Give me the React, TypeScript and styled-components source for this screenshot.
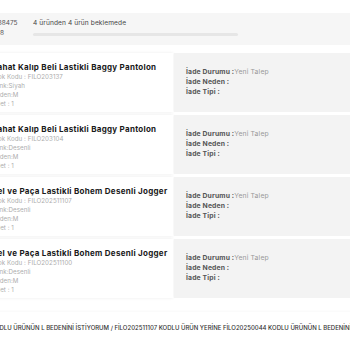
import React from 'react';
import styled, { createGlobalStyle } from 'styled-components';

const GlobalStyle = createGlobalStyle`
  html, body {
    margin: 0;
    padding: 0;
    background: #ffffff;
    overflow: hidden;
    font-family: "Inter", "Open Sans", sans-serif;
  }
`;

interface IReturnItem {
  title: string;
  code: string;
  color: string;
  size: string;
  qty: number;
}

const items: IReturnItem[] = [
  { title: 'Rahat Kalıp Beli Lastikli Baggy Pantolon', code: 'FILO203137', color: 'Siyah', size: 'M', qty: 1 },
  { title: 'Rahat Kalıp Beli Lastikli Baggy Pantolon', code: 'FILO203104', color: 'Desenli', size: 'M', qty: 1 },
  { title: 'Bel ve Paça Lastikli Bohem Desenli Jogger', code: 'FILO202511107', color: 'Desenli', size: 'M', qty: 1 },
  { title: 'Bel ve Paça Lastikli Bohem Desenli Jogger', code: 'FILO202511100', color: 'Desenli', size: 'M', qty: 1 },
];

const Page = styled.div`
  margin-left: -8px;
  width: 420px;
  padding-top: 13px;
`;

const Header = styled.div`
  height: 32px;
  background-color: #f6f6f6;
  display: flex;
  align-items: flex-start;
  padding-top: 5px;
  box-sizing: border-box;
`;

const OrderNo = styled.div`
  width: 26px;
  flex-shrink: 0;
  display: flex;
  flex-direction: column;
  align-items: flex-start;
  font-size: 6.5px;
  line-height: 10px;
  color: #555;
  white-space: nowrap;
`;

const OrderLine = styled.span<{ $shift: number }>`
  margin-left: ${({ $shift }) => $shift}px;
`;

const Progress = styled.div`
  margin-left: 15px;
  width: 205px;
  display: flex;
  flex-direction: column;
`;

const ProgressLabel = styled.div`
  font-size: 6.6px;
  line-height: 10px;
  color: #444;
  letter-spacing: 0.1px;
`;

const ProgressTrack = styled.div`
  margin-top: 5px;
  height: 3px;
  border-radius: 2px;
  background-color: #e6e6e6;
`;

const HeaderLink = styled.div`
  margin-left: auto;
  margin-right: 37px;
  font-size: 7px;
  line-height: 10px;
  color: #333;
`;

const List = styled.div`
  display: flex;
  flex-direction: column;
  gap: 3px;
  margin-top: 8px;
`;

const Row = styled.div`
  display: flex;
  height: 59px;
  gap: 1px;
`;

const Card = styled.div`
  width: 181px;
  background: #fff;
  box-shadow: 0 0 3px rgba(0, 0, 0, 0.08);
  padding: 9px 0 0 0;
  box-sizing: border-box;
`;

const Title = styled.div`
  font-size: 8px;
  font-weight: 700;
  line-height: 10px;
  color: #1a1a1a;
  white-space: nowrap;
  letter-spacing: 0.28px;
`;

const Meta = styled.div`
  font-size: 6.2px;
  line-height: 9px;
  color: #adadad;
  white-space: nowrap;
  letter-spacing: 0.05px;
`;

const Status = styled.div`
  width: 230px;
  background-color: #f3f3f3;
  padding: 14px 0 0 12px;
  box-sizing: border-box;
`;

const StatusLine = styled.div`
  font-size: 6.8px;
  line-height: 10px;
  font-weight: 700;
  color: #555;
  white-space: nowrap;
  letter-spacing: 0.15px;
`;

const StatusValue = styled.span`
  font-weight: 400;
  color: #999;
`;

const Note = styled.div`
  margin-top: 14px;
  margin-left: -1px;
  height: 30px;
  box-shadow: 0 0 3px rgba(0, 0, 0, 0.05);
  display: flex;
  align-items: center;
  font-size: 6px;
  font-weight: 500;
  color: #333;
  white-space: nowrap;
  letter-spacing: 0;
`;

const App: React.FC = () => {
  return (
    <>
      <GlobalStyle />
      <Page>
        <Header>
          <OrderNo>
            <OrderLine $shift={3}>138475</OrderLine>
            <OrderLine $shift={-4}>2028</OrderLine>
          </OrderNo>
          <Progress>
            <ProgressLabel>4 üründen 4 ürün beklemede</ProgressLabel>
            <ProgressTrack />
          </Progress>
          <HeaderLink>Detay</HeaderLink>
        </Header>
        <List>
          {items.map((item, i) => (
            <Row key={i}>
              <Card>
                <Title>{item.title}</Title>
                <Meta>Stok Kodu : {item.code}</Meta>
                <Meta>Renk:{item.color}</Meta>
                <Meta>Beden:{item.size}</Meta>
                <Meta>Adet : {item.qty}</Meta>
              </Card>
              <Status>
                <StatusLine>
                  İade Durumu :<StatusValue>Yeni Talep</StatusValue>
                </StatusLine>
                <StatusLine>İade Neden :</StatusLine>
                <StatusLine>İade Tipi :</StatusLine>
              </Status>
            </Row>
          ))}
        </List>
        <Note>
          KODLU ÜRÜNÜN L BEDENİNİ İSTİYORUM / FİLO202511107 KODLU ÜRÜN YERİNE FİLO20250044 KODLU ÜRÜNÜN L BEDENİNİ İSTİYORUM
        </Note>
      </Page>
    </>
  );
};

export default App;
